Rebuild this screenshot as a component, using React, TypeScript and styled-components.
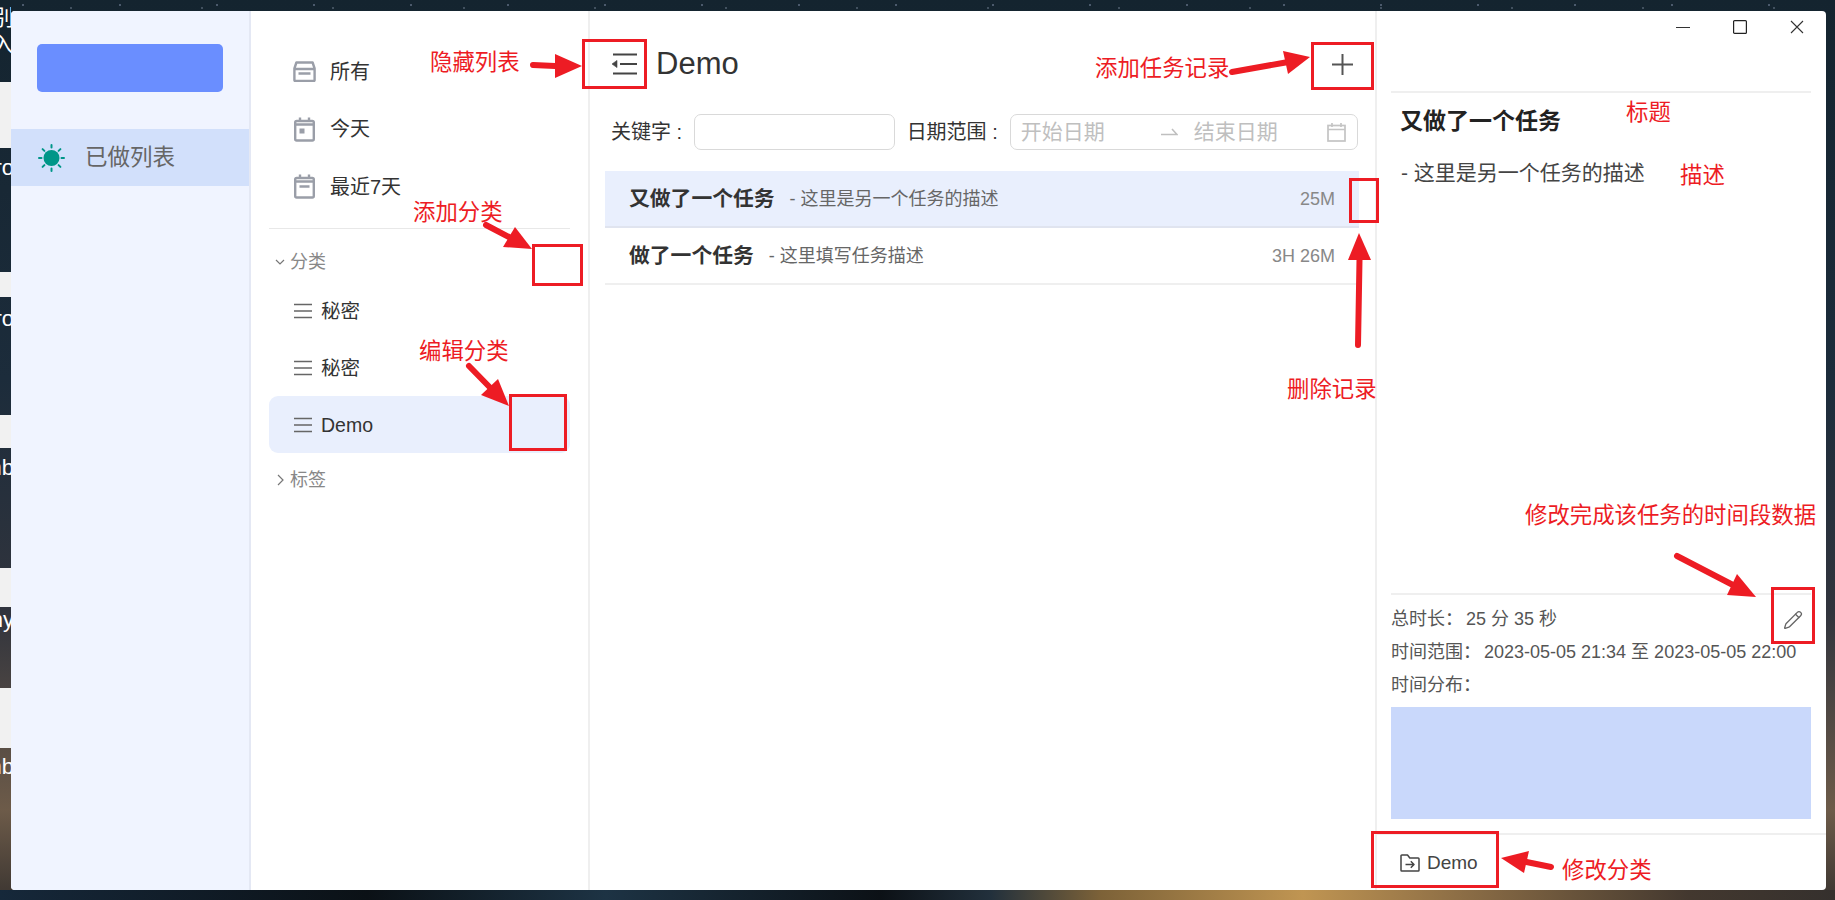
import React from "react";
import styled, { createGlobalStyle } from "styled-components";
import { Pencil } from "lucide-react";

const Global = createGlobalStyle`
  html, body { margin: 0; padding: 0; background: #15242f; }
  * { box-sizing: border-box; }
  body { font-family: "Liberation Sans", "Noto Sans CJK SC", sans-serif; overflow: hidden; }
`;

const Page = styled.div`
  position: relative;
  width: 1835px;
  height: 900px;
  padding: 11px 9px 10px 11px;
  overflow: hidden;
  background:
    radial-gradient(1px 1px at 23px 5px, #cfdcff, transparent),
    radial-gradient(1px 1px at 71px 8px, #aebbd0, transparent),
    linear-gradient(180deg, #14242f 0, #1c2c3b 42%, #31343d 68%, #6d5b49 90%, #3b3531 100%);
  background-size: 97px 23px, 131px 37px, 100% 100%;
`;

const DesktopEdge = styled.div`
  position: absolute;
  left: 0;
  top: 0;
  width: 11px;
  height: 890px;
  overflow: hidden;
`;

const DesktopThumb = styled.div<{ $top: number; $h: number }>`
  position: absolute;
  left: 0;
  width: 11px;
  top: ${(p) => p.$top}px;
  height: ${(p) => p.$h}px;
  background: #f1f1f1;
`;

const DesktopLabel = styled.span<{ $top: number }>`
  position: absolute;
  right: -3px;
  top: ${(p) => p.$top}px;
  color: #fff;
  font-size: 22px;
  line-height: 26px;
  white-space: nowrap;
`;

const Horizon = styled.div`
  position: absolute;
  left: 0;
  right: 0;
  bottom: 0;
  height: 10px;
  background: linear-gradient(90deg, #16283a 0, #0b1116 20%, #1d3344 33%, #0c1116 48%, #22303c 54%, #7d6238 60%, #c09552 71%, #8a6c45 80%, #43382f 92%, #35302d 100%);
`;

const Window = styled.div`
  position: relative;
  z-index: 1;
  display: flex;
  width: 1815px;
  height: 879px;
  border-radius: 4px;
  overflow: hidden;
  background: #fff;
`;

const Rail = styled.aside`
  flex: none;
  width: 240px;
  padding-top: 33px;
  background: #f0f4ff;
  border-right: 2px solid #e4e8f4;
`;

const CreateButton = styled.div`
  width: 186px;
  height: 48px;
  margin: 0 0 37px 26px;
  border-radius: 5px;
  background: #6a8eff;
`;

const RailItem = styled.div`
  display: flex;
  align-items: center;
  gap: 20px;
  height: 57px;
  padding-left: 27px;
  background: #d2e0fb;
  color: #666;
  font-size: 22.5px;
  line-height: 30px;
`;

const NavPane = styled.nav`
  flex: none;
  width: 339px;
  padding: 32px 18px 0 18px;
  border-right: 2px solid #efefef;
`;

const QuickItem = styled.div`
  display: flex;
  align-items: center;
  gap: 14px;
  height: 57.5px;
  padding-left: 24px;
  color: #333;
  font-size: 20px;
  line-height: 28px;
`;

const NavDivider = styled.div`
  height: 1px;
  margin: 12px 0 15.5px;
  background: #e8e8e8;
`;

const SectionHeader = styled.div<{ $after?: boolean }>`
  display: flex;
  align-items: center;
  gap: 5px;
  height: 36px;
  margin-top: ${(p) => (p.$after ? 9 : 0)}px;
  margin-bottom: 2px;
  padding-left: 6px;
  color: #888;
  font-size: 18px;
  line-height: 24px;
`;

const CategoryItem = styled.div<{ $active?: boolean }>`
  display: flex;
  align-items: center;
  gap: 9px;
  height: 57px;
  padding-left: 25px;
  border-radius: 9px;
  background: ${(p) => (p.$active ? "#e9effd" : "transparent")};
  color: #333;
  font-size: 19.5px;
  line-height: 26px;
`;

const MainPane = styled.main`
  flex: none;
  width: 785px;
  padding-top: 28px;
`;

const MainHeader = styled.header`
  display: flex;
  align-items: center;
  height: 50px;
  padding: 0 22px 0 21px;
`;

const PageTitle = styled.h1`
  flex: 1;
  margin: 0 0 0 19px;
  color: #333;
  font-size: 31px;
  font-weight: 400;
  line-height: 40px;
`;

const Filters = styled.div`
  display: flex;
  align-items: center;
  height: 36px;
  margin-top: 25px;
  padding-left: 21px;
`;

const FilterLabel = styled.span<{ $gap: number }>`
  margin-right: 12px;
  margin-left: ${(p) => p.$gap}px;
  color: #333;
  font-size: 20px;
  line-height: 28px;
  white-space: nowrap;
`;

const TextBox = styled.div`
  width: 201px;
  height: 36px;
  border: 1px solid #d9d9d9;
  border-radius: 7px;
`;

const RangeBox = styled.div`
  display: flex;
  align-items: center;
  width: 348px;
  height: 36px;
  padding: 0 11px 0 10px;
  border: 1px solid #d9d9d9;
  border-radius: 7px;
  color: #bfbfbf;
  font-size: 21px;
  line-height: 28px;
`;

const RangeArrow = styled.span`
  display: flex;
  width: 17px;
  margin: 0 16px 0 56px;
`;

const RangeEnd = styled.span`
  flex: 1;
`;

const TaskList = styled.ul`
  margin: 21px 16px 0 15px;
  padding: 0;
  list-style: none;
`;

const TaskRow = styled.li<{ $active?: boolean }>`
  display: flex;
  align-items: center;
  height: 57px;
  padding: 0 24px;
  border-bottom: 2px solid ${(p) => (p.$active ? "#e0e4ef" : "#efefef")};
  background: ${(p) => (p.$active ? "#e9effd" : "#fff")};
`;

const TaskTitle = styled.strong`
  color: #333;
  font-size: 20.8px;
  font-weight: 700;
  line-height: 28px;
`;

const TaskDesc = styled.span`
  flex: 1;
  margin-left: 15px;
  color: #666;
  font-size: 18px;
  line-height: 26px;
`;

const TaskTime = styled.span`
  color: #888;
  font-size: 18px;
  line-height: 26px;
`;

const DetailPane = styled.section`
  flex: none;
  display: flex;
  flex-direction: column;
  width: 451px;
  border-left: 2px solid #efefef;
`;

const WindowBar = styled.div`
  display: flex;
  justify-content: flex-end;
  gap: 43px;
  height: 80px;
  padding: 9px 22px 0 0;
`;

const DetailRule = styled.div`
  flex: none;
  height: 2px;
  margin: 0 15px 0 14px;
  background: #efefef;
`;

const DetailTitle = styled.h2`
  margin: 8px 0 0 23px;
  color: #222;
  font-size: 23px;
  font-weight: 700;
  line-height: 40px;
`;

const DetailDesc = styled.p`
  flex: 1;
  margin: 16px 0 0 24px;
  color: #444;
  font-size: 21px;
  line-height: 32px;
`;

const Stats = styled.div`
  margin: 0 15px 14px 14px;
  padding-top: 8px;
  border-top: 2px solid #efefef;
  color: #555;
  font-size: 18px;
  line-height: 33px;
`;

const StatLine = styled.div`
  display: flex;
  align-items: center;
  justify-content: space-between;
  height: 33px;
  white-space: nowrap;
`;

const StatKey = styled.span`
  margin-right: 3px;
`;

const EditIcon = styled(Pencil)`
  margin-right: 8px;
  color: #666;
`;

const TimeBlock = styled.div`
  height: 112px;
  margin-top: 5px;
  background: #c9d8fb;
`;

const Footer = styled.footer`
  flex: none;
  display: flex;
  align-items: center;
  gap: 7px;
  height: 57px;
  padding-left: 23px;
  border-top: 2px solid #efefef;
  color: #444;
  font-size: 19px;
  line-height: 26px;
`;

const Overlay = styled.div`
  position: absolute;
  inset: 0;
  z-index: 5;
  pointer-events: none;
`;

const ArrowLayer = styled.svg`
  position: absolute;
  left: 0;
  top: 0;
  width: 1835px;
  height: 900px;
`;

const Callout = styled.span<{ $x: number; $y: number }>`
  position: absolute;
  left: ${(p) => p.$x}px;
  top: ${(p) => p.$y - 15}px;
  color: #ed1c24;
  font-size: 22.4px;
  line-height: 30px;
  white-space: nowrap;
`;

const Frame = styled.div<{ $x: number; $y: number; $w: number; $h: number }>`
  position: absolute;
  left: ${(p) => p.$x}px;
  top: ${(p) => p.$y}px;
  width: ${(p) => p.$w}px;
  height: ${(p) => p.$h}px;
  border: 3px solid #ed1c24;
`;

const GRAY = "#9a9ea8";

const SunIcon = () => (
  <svg width="27" height="28" viewBox="0 0 27 28" fill="none">
    <circle cx="13.5" cy="14" r="8" fill="#009688" />
    <g stroke="#009688" strokeWidth="2" strokeLinecap="round">
      <path d="M13.5 1v2.5M13.5 24.5V27M1 14h2.5M23.5 14H26M4.6 5.1l1.8 1.8M20.6 21.1l1.8 1.8M22.4 5.1l-1.8 1.8M6.4 21.1l-1.8 1.8" />
    </g>
  </svg>
);

const InboxIcon = () => (
  <svg width="23" height="21" viewBox="0 0 23 21" fill="none" stroke={GRAY} strokeWidth="2.4">
    <path d="M1.4 7.5 3.4 1.5h16.2l2 6v11.8a.6.6 0 0 1-.6.6H2a.6.6 0 0 1-.6-.6z" strokeLinejoin="round" />
    <path d="M1.4 8h20.2M5.5 12.5h12" />
  </svg>
);

const CalendarIcon = ({ dash }: { dash?: boolean }) => (
  <svg width="23" height="25" viewBox="0 0 23 25" fill="none" stroke={GRAY} strokeWidth="2.4">
    <rect x="2.2" y="4" width="18.6" height="19.5" rx="1.5" />
    <path d="M7 0.5v4M16 0.5v4M2.2 7.5h18.6" />
    {dash ? (
      <path d="M6.5 12.5h10" />
    ) : (
      <rect x="6.5" y="11.5" width="5" height="5" fill={GRAY} stroke="none" />
    )}
  </svg>
);

const ListLines = () => (
  <svg width="18" height="16" viewBox="0 0 18 16" stroke="#666" strokeWidth="1.7">
    <path d="M0 1.5h18M0 8h18M0 14.5h18" />
  </svg>
);

const ChevronDown = () => (
  <svg width="10" height="10" viewBox="0 0 10 10" fill="none" stroke="#777" strokeWidth="1.2">
    <path d="M1 3l4 4 4-4" />
  </svg>
);

const ChevronRight = () => (
  <svg width="10" height="12" viewBox="0 0 10 12" fill="none" stroke="#777" strokeWidth="1.2">
    <path d="M3 1l5 5-5 5" />
  </svg>
);

const CollapseIcon = () => (
  <svg width="26" height="22" viewBox="0 0 26 22" fill="#444" stroke="#444" strokeWidth="2">
    <path d="M2 1.5h24M9 11h17M2 20.5h24" fill="none" />
    <path d="M1 11l5-3.6v7.2z" strokeWidth="0.6" />
  </svg>
);

const PlusIcon = () => (
  <svg width="21" height="21" viewBox="0 0 21 21" stroke="#555" strokeWidth="2">
    <path d="M10.5 0v21M0 10.5h21" />
  </svg>
);

const SwapArrow = () => (
  <svg width="17" height="10" viewBox="0 0 17 10" fill="none" stroke="#bfbfbf" strokeWidth="1.6">
    <path d="M0 7.5h16L11 2" />
  </svg>
);

const CalendarOutline = () => (
  <svg width="19" height="19" viewBox="0 0 19 19" fill="none" stroke="#c4c4c4" strokeWidth="1.7">
    <rect x="1" y="2.5" width="17" height="15.5" />
    <path d="M5 0v4M14 0v4M1 6.5h17" />
  </svg>
);

const MinIcon = () => (
  <svg width="14" height="14" viewBox="0 0 14 14" stroke="#333" strokeWidth="1">
    <path d="M0 7.5h14" />
  </svg>
);

const MaxIcon = () => (
  <svg width="14" height="14" viewBox="0 0 14 14" fill="none" stroke="#222" strokeWidth="1.2">
    <rect x="0.6" y="0.6" width="12.8" height="12.8" rx="1" />
  </svg>
);

const CloseIcon = () => (
  <svg width="14" height="14" viewBox="0 0 14 14" stroke="#333" strokeWidth="1.1">
    <path d="M1 1l12 12M13 1L1 13" />
  </svg>
);

const FolderMove = () => (
  <svg width="20" height="18" viewBox="0 0 20 18" fill="none" stroke="#444" strokeWidth="1.5" strokeLinejoin="round">
    <path d="M1 16.2V1.8A.8.8 0 0 1 1.8 1h5.7l2.3 3h8.4a.8.8 0 0 1 .8.8v11.4a.8.8 0 0 1-.8.8H1.8a.8.8 0 0 1-.8-.8z" />
    <path d="M5.5 10.5h8.5M10.8 7.3l3.2 3.2-3.2 3.2" />
  </svg>
);

type ArrowSpec = {
  tail: [number, number];
  tip: [number, number];
  left: [number, number];
  right: [number, number];
};

const arrows: ArrowSpec[] = [
  { tail: [533, 65], tip: [582, 66], left: [555, 54], right: [555, 78] },
  { tail: [486, 225], tip: [532, 249], left: [515, 227], right: [503, 247] },
  { tail: [469, 366], tip: [509, 406], left: [498, 379], right: [481, 395] },
  { tail: [1232, 72], tip: [1310, 57], left: [1283, 51], right: [1288, 74] },
  { tail: [1358, 345], tip: [1359, 233], left: [1348, 260], right: [1371, 260] },
  { tail: [1677, 556], tip: [1756, 597], left: [1737, 574], right: [1727, 595] },
  { tail: [1551, 867], tip: [1501, 858], left: [1529, 851], right: [1524, 873] },
];

const callouts: { x: number; y: number; text: string }[] = [
  { x: 430, y: 63, text: "隐藏列表" },
  { x: 413, y: 213, text: "添加分类" },
  { x: 419, y: 352, text: "编辑分类" },
  { x: 1095, y: 69, text: "添加任务记录" },
  { x: 1287, y: 390, text: "删除记录" },
  { x: 1626, y: 113, text: "标题" },
  { x: 1680, y: 176, text: "描述" },
  { x: 1525, y: 516, text: "修改完成该任务的时间段数据" },
  { x: 1562, y: 871, text: "修改分类" },
];

const frames: { x: number; y: number; w: number; h: number }[] = [
  { x: 582, y: 39, w: 65, h: 50 },
  { x: 1311, y: 42, w: 63, h: 48 },
  { x: 1349, y: 178, w: 30, h: 45 },
  { x: 532, y: 244, w: 51, h: 42 },
  { x: 509, y: 394, w: 58, h: 57 },
  { x: 1771, y: 587, w: 44, h: 57 },
  { x: 1371, y: 831, w: 128, h: 57 },
];

const thumbs = [
  { top: 82, h: 66 },
  { top: 272, h: 25 },
  { top: 415, h: 33 },
  { top: 568, h: 39 },
  { top: 688, h: 60 },
];

const labels = [
  { top: 5, text: "别" },
  { top: 32, text: "入" },
  { top: 155, text: "ro" },
  { top: 306, text: "ro" },
  { top: 455, text: "nb" },
  { top: 607, text: "ny" },
  { top: 754, text: "nb" },
];

export default function App() {
  return (
    <Page>
      <Global />
      <DesktopEdge>
        {thumbs.map((t) => (
          <DesktopThumb key={t.top} $top={t.top} $h={t.h} />
        ))}
        {labels.map((l) => (
          <DesktopLabel key={l.top} $top={l.top}>
            {l.text}
          </DesktopLabel>
        ))}
      </DesktopEdge>
      <Horizon />
      <Window>
        <Rail>
          <CreateButton />
          <RailItem>
            <SunIcon />
            已做列表
          </RailItem>
        </Rail>
        <NavPane>
          <QuickItem>
            <InboxIcon />
            所有
          </QuickItem>
          <QuickItem>
            <CalendarIcon />
            今天
          </QuickItem>
          <QuickItem>
            <CalendarIcon dash />
            最近7天
          </QuickItem>
          <NavDivider />
          <SectionHeader>
            <ChevronDown />
            分类
          </SectionHeader>
          <CategoryItem>
            <ListLines />
            秘密
          </CategoryItem>
          <CategoryItem>
            <ListLines />
            秘密
          </CategoryItem>
          <CategoryItem $active>
            <ListLines />
            Demo
          </CategoryItem>
          <SectionHeader $after>
            <ChevronRight />
            标签
          </SectionHeader>
        </NavPane>
        <MainPane>
          <MainHeader>
            <CollapseIcon />
            <PageTitle>Demo</PageTitle>
            <PlusIcon />
          </MainHeader>
          <Filters>
            <FilterLabel $gap={0}>关键字 :</FilterLabel>
            <TextBox />
            <FilterLabel $gap={11.5}>日期范围 :</FilterLabel>
            <RangeBox>
              <span>开始日期</span>
              <RangeArrow>
                <SwapArrow />
              </RangeArrow>
              <RangeEnd>结束日期</RangeEnd>
              <CalendarOutline />
            </RangeBox>
          </Filters>
          <TaskList>
            <TaskRow $active>
              <TaskTitle>又做了一个任务</TaskTitle>
              <TaskDesc>- 这里是另一个任务的描述</TaskDesc>
              <TaskTime>25M</TaskTime>
            </TaskRow>
            <TaskRow>
              <TaskTitle>做了一个任务</TaskTitle>
              <TaskDesc>- 这里填写任务描述</TaskDesc>
              <TaskTime>3H 26M</TaskTime>
            </TaskRow>
          </TaskList>
        </MainPane>
        <DetailPane>
          <WindowBar>
            <MinIcon />
            <MaxIcon />
            <CloseIcon />
          </WindowBar>
          <DetailRule />
          <DetailTitle>又做了一个任务</DetailTitle>
          <DetailDesc>- 这里是另一个任务的描述</DetailDesc>
          <Stats>
            <StatLine>
              <span>
                <StatKey>总时长：</StatKey>25 分 35 秒
              </span>
              <EditIcon size={20} strokeWidth={1.6} />
            </StatLine>
            <StatLine>
              <span>
                <StatKey>时间范围：</StatKey>2023-05-05 21:34 至 2023-05-05 22:00
              </span>
            </StatLine>
            <StatLine>时间分布：</StatLine>
            <TimeBlock />
          </Stats>
          <Footer>
            <FolderMove />
            Demo
          </Footer>
        </DetailPane>
      </Window>
      <Overlay>
        <ArrowLayer viewBox="0 0 1835 900">
          {arrows.map((a) => {
            const nx = (a.left[0] + a.right[0]) / 2;
            const ny = (a.left[1] + a.right[1]) / 2;
            return (
              <g key={a.tip.join()}>
                <line x1={a.tail[0]} y1={a.tail[1]} x2={nx} y2={ny} stroke="#ed1c24" strokeWidth="6" strokeLinecap="round" />
                <polygon points={`${a.tip} ${a.left} ${nx},${ny} ${a.right}`} fill="#ed1c24" />
              </g>
            );
          })}
        </ArrowLayer>
        {frames.map((f) => (
          <Frame key={`${f.x}-${f.y}`} $x={f.x} $y={f.y} $w={f.w} $h={f.h} />
        ))}
        {callouts.map((c) => (
          <Callout key={c.text} $x={c.x} $y={c.y}>
            {c.text}
          </Callout>
        ))}
      </Overlay>
    </Page>
  );
}
